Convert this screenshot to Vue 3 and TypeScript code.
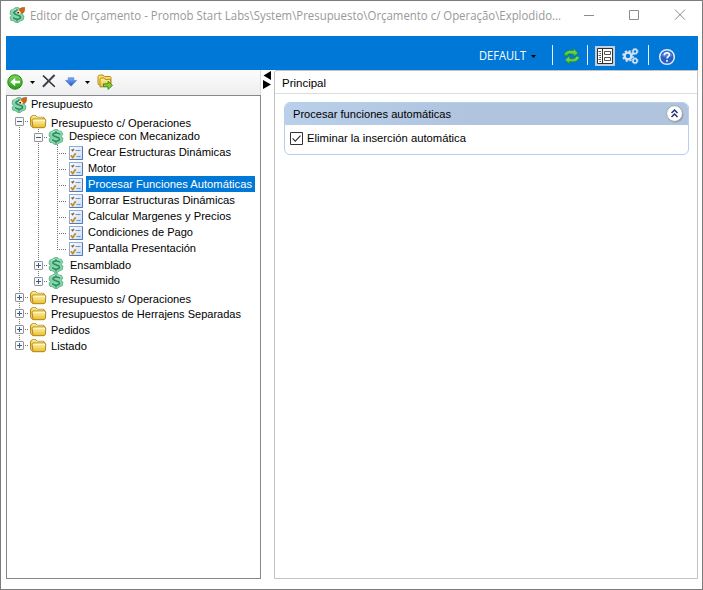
<script setup lang="ts">
type Guide = 'line' | 'tee' | 'end' | 'plus' | 'minus' | 'pluslast' | 'minusfirst'
interface Row {
  label: string
  icon: 'root' | 'folder' | 'money' | 'task'
  guides: Guide[]
  dy: number
  width: number
  selected?: boolean
}

const rows: Row[] = [
  { label: 'Presupuesto', icon: 'root', guides: [], dy: -1, width: 62 },
  { label: 'Presupuesto c/ Operaciones', icon: 'folder', guides: ['minusfirst'], dy: 2, width: 140 },
  { label: 'Despiece con Mecanizado', icon: 'money', guides: ['line', 'minus'], dy: -1, width: 131 },
  { label: 'Crear Estructuras Dinámicas', icon: 'task', guides: ['line', 'line', 'tee'], dy: -1, width: 143 },
  { label: 'Motor', icon: 'task', guides: ['line', 'line', 'tee'], dy: -1, width: 28 },
  { label: 'Procesar Funciones Automáticas', icon: 'task', guides: ['line', 'line', 'tee'], dy: -1, width: 164, selected: true },
  { label: 'Borrar Estructuras Dinámicas', icon: 'task', guides: ['line', 'line', 'tee'], dy: -1, width: 147 },
  { label: 'Calcular Margenes y Precios', icon: 'task', guides: ['line', 'line', 'tee'], dy: -1, width: 143 },
  { label: 'Condiciones de Pago', icon: 'task', guides: ['line', 'line', 'tee'], dy: -1, width: 105 },
  { label: 'Pantalla Presentación', icon: 'task', guides: ['line', 'line', 'end'], dy: -1, width: 108 },
  { label: 'Ensamblado', icon: 'money', guides: ['line', 'plus'], dy: 0, width: 61 },
  { label: 'Resumido', icon: 'money', guides: ['line', 'pluslast'], dy: -1, width: 50 },
  { label: 'Presupuesto s/ Operaciones', icon: 'folder', guides: ['plus'], dy: 2, width: 140 },
  { label: 'Presupuestos de Herrajens Separadas', icon: 'folder', guides: ['plus'], dy: 1, width: 190 },
  { label: 'Pedidos', icon: 'folder', guides: ['plus'], dy: 1, width: 39 },
  { label: 'Listado', icon: 'folder', guides: ['pluslast'], dy: 1, width: 36 },
]
</script>

<template>
  <div class="window">
    <svg class="defs" width="0" height="0">
      <defs>
        <linearGradient id="gFolder" x1="0" y1="0" x2="0" y2="1">
          <stop offset="0" stop-color="#fff6b0" /><stop offset="1" stop-color="#e9bd2c" />
        </linearGradient>
        <linearGradient id="gGreen" x1="0" y1="0" x2="0" y2="1">
          <stop offset="0" stop-color="#7ed75a" /><stop offset="1" stop-color="#1f9d12" />
        </linearGradient>
        <linearGradient id="gArrows" x1="0" y1="0" x2="0" y2="1">
          <stop offset="0" stop-color="#8fe35c" /><stop offset="1" stop-color="#3cb82c" />
        </linearGradient>
        <linearGradient id="gBlue" x1="0" y1="0" x2="0" y2="1">
          <stop offset="0" stop-color="#7fb2f6" /><stop offset="1" stop-color="#1c50c8" />
        </linearGradient>
        <linearGradient id="gTask" x1="0" y1="0" x2="1" y2="1">
          <stop offset="0" stop-color="#ffffff" /><stop offset="1" stop-color="#c9dcf5" />
        </linearGradient>
        <symbol id="money" viewBox="0 0 16 16">
          <path d="M6 .8 9.6.6 10.3 2 13.4 2.4 14.8 5.5 13 7.2 14.9 9 14.4 12.6 11 14 9.4 15.6 6.2 15.3 5.3 14 1.8 13.2 1 10.2 2.7 8.8 1.1 6.9 1.6 3.4 5 2Z" fill="#85d5aa" stroke="#58b085" stroke-width=".9" />
          <path d="M3 4.2c2-2.4 7.3-2.4 9.8-.2M3.2 10.6c.3 1.4 1.8 1.8 3 2" fill="none" stroke="#b9ebce" stroke-width="1" />
          <path d="M12 5.4C11 3.7 5.2 3.5 4.9 5.7c-.2 2.3 6.9 1.9 6.6 4.6-.3 2.4-6 2.4-7.4.2" fill="none" stroke="#2f8a60" stroke-width="1.5" />
          <path d="M8 2v2.2M8 12v2.4" stroke="#2f8a60" stroke-width="1.2" />
        </symbol>
        <symbol id="root" viewBox="0 0 16 16">
          <use href="#money" x="0" y="0" width="16" height="16" />
          <path d="m9.3 3.6 2.4-2.7 4-.6-.3 4-3.5 2.5z" fill="#d3631b" stroke="#9d420d" stroke-width=".5" />
          <path d="m7.6 4.2 2.2-1.2 2.5 2.9-2.4 1.6-2.3-.6z" fill="#fae6be" />
          <path d="M8.3 4.9h1.7v1.6H8.3z" fill="#20251f" />
        </symbol>
        <symbol id="folder" viewBox="0 0 17 16">
          <path d="M.6 11.5V3.3l1.4-1.5h4l1.3 1.5h6.3l1 1V12l-1.5 1.5H2.7z" fill="#f4d85d" stroke="#b08315" />
          <path d="M1.8 3.5 2.7 2.7h3.2l1 1.4h6" fill="none" stroke="#fff5b4" />
          <path d="m3 13.7-.9-7.2L3.2 5h11.6l1 1-.5 6.7-1.2 1z" fill="url(#gFolder)" stroke="#b58719" />
          <path d="M3.4 6.2H15" stroke="#fffcd8" />
        </symbol>
        <symbol id="task" viewBox="0 0 14 14">
          <rect x=".5" y=".5" width="13" height="13" fill="url(#gTask)" stroke="#8baddb" />
          <path d="M.5 13.5h13V.5" fill="none" stroke="#5579b7" />
          <path d="M6.5 4.5h5M7.5 10.5h4" stroke="#7794c8" />
          <path d="m2.5 3.5 1.2 1.2 1.2-1.8" fill="none" stroke="#7c6349" stroke-width="1.3" />
          <path d="m1.9 9.3 1.8 2.2 3-4.2" fill="none" stroke="#d18618" stroke-width="1.7" />
        </symbol>
      </defs>
    </svg>

    <header class="titlebar">
      <svg class="app-icon" width="16" height="16"><use href="#root" /></svg>
      <svg class="title" width="534" height="20"><text x="0" y="14" textLength="531" lengthAdjust="spacingAndGlyphs">Editor de Orçamento - Promob Start Labs\System\Presupuesto\Orçamento c/ Operação\Explodido...</text></svg>
      <svg class="caption" width="100" height="12" viewBox="0 0 100 12">
        <path d="M0 6.5h10M45.5 1.5h9v9h-9zM91 .7l10 10M101 .7l-10 10" fill="none" stroke="#8c8c8c" />
      </svg>
    </header>

    <nav class="ribbon">
      <svg class="profile" width="48" height="18"><text x="0" y="12" textLength="47" lengthAdjust="spacingAndGlyphs">DEFAULT</text></svg>
      <i class="caret"></i>
      <i class="sep s1"></i>
      <svg class="refresh" width="17" height="17" viewBox="0 0 17 17">
        <g fill="url(#gArrows)" stroke="#1f8a1c" stroke-width=".6">
          <path d="M.9 7.2C1.8 3 6 1.8 10.4 2.9V.5l4.6 4.7-4.4 3.6V6.4C7.2 5.4 4.8 5.5 3.9 8z" />
          <path d="M16.2 9c-.8 4.4-5.3 5.6-9.5 4.6v2.7L2 11.9l4.5-3.8v2.5c3.4.9 6 .1 6.9-2.3z" />
        </g>
      </svg>
      <i class="sep s2"></i>
      <span class="pressed">
        <svg width="16" height="16" viewBox="0 0 16 16">
          <path d="M.5.5h15v15H.5z" fill="#fff" stroke="#303030" />
          <path d="M5.5.5v15" stroke="#303030" />
          <path d="M1.5 3.5H4M2.5 5.5H4M1.5 7.5H4M2.5 9.5H4M1.5 11.5H4M2.5 13.5H4M7.5 3.5h6v3h-6zM7.5 9.5h6v3h-6z" fill="none" stroke="#555" />
        </svg>
      </span>
      <svg class="gears" width="17" height="17" viewBox="0 0 17 17">
        <g fill="none" stroke="#d5e4f3">
          <circle cx="6" cy="8" r="3.4" stroke-width="2.4" />
          <circle cx="6" cy="8" r="5.1" stroke-width="1.5" stroke-dasharray="2.3 1.7" />
          <circle cx="13" cy="3.4" r="2" stroke-width="1.5" />
          <circle cx="13" cy="3.4" r="3" stroke-width=".9" stroke-dasharray="1.5 .85" />
          <circle cx="13" cy="12.8" r="2" stroke-width="1.5" />
          <circle cx="13" cy="12.8" r="3" stroke-width=".9" stroke-dasharray="1.5 .85" />
        </g>
      </svg>
      <i class="sep s3"></i>
      <svg class="help" width="18" height="18" viewBox="0 0 18 18">
        <circle cx="9" cy="9" r="7.3" fill="#2c5fc4" stroke="#e2ebf8" stroke-width="1.5" />
        <path d="M3.5 8a5.6 5.6 0 0 1 11 0q-5.5 2-11 0" fill="#5585da" />
        <path d="M6.4 7.3C6.3 3.8 11.7 4.2 11.4 7c-.1 1.6-2.4 1.7-2.4 3.5M9 12v1.7" fill="none" stroke="#fff" stroke-width="1.6" />
      </svg>
    </nav>

    <main class="content">
      <aside class="left">
        <div class="toolbar">
          <svg width="16" height="16" viewBox="0 0 16 16">
            <circle cx="8" cy="8" r="7.2" fill="url(#gGreen)" stroke="#27831b" />
            <path d="M13 6.8v2.4H8.2v3L3.4 8l4.8-4.2v3z" fill="#fff" />
          </svg>
          <i class="caret c1"></i>
          <svg class="delete" width="14" height="14" viewBox="0 0 14 14">
            <path d="m1 1.5 11.8 11.2" stroke="#25292f" stroke-width="1.5" />
            <path d="M12.6 1 .9 12.8" stroke="#3b4351" stroke-width="2" />
          </svg>
          <svg class="down" width="12" height="10" viewBox="0 0 12 10">
            <path d="M3.2.8h5.6v2.8h2.7L6 9.2.5 3.6h2.7z" fill="url(#gBlue)" stroke="#4e7fd5" stroke-width=".7" />
          </svg>
          <i class="caret c2"></i>
          <svg class="export" width="16" height="16" viewBox="0 0 16 16">
            <path d="M1 10V2.5L2.3 1H6l1.2 1.5h6l.8 1V11H2z" fill="#f5dd68" stroke="#b78e1e" />
            <path d="M3 13V5.4L4 4h3l1 1.4h5.5v6.7z" fill="url(#gFolder)" stroke="#b78e1e" />
            <path d="M6.5 9.8H11V7.2l4.5 4.2-4.5 4v-2.6H6.5z" fill="#83cc35" stroke="#3d8420" stroke-width=".9" />
          </svg>
        </div>
        <div class="tree">
          <div v-for="row in rows" :key="row.label" class="row" :class="row.icon">
            <span v-for="(guide, i) in row.guides" :key="i" class="cell">
              <svg width="19" height="16" viewBox="0 0 19 16">
                <path v-if="guide === 'end' || guide === 'pluslast'" d="M9.5 0v9" class="dots" />
                <path v-else-if="guide === 'minusfirst'" d="M9.5 8v8" class="dots" />
                <path v-else d="M9.5 0v16" class="dots" />
                <path v-if="guide !== 'line'" d="M9 8.5h10" class="dots" />
                <template v-if="guide.startsWith('plus') || guide.startsWith('minus')">
                  <rect x="5.5" y="4.5" width="8" height="8" rx=".6" fill="#f8f8f8" stroke="#919191" />
                  <path d="M7 8.5h5" stroke="#3d569c" />
                  <path v-if="guide.startsWith('plus')" d="M9.5 6v5" stroke="#3d569c" />
                </template>
              </svg>
            </span>
            <svg v-if="row.icon === 'folder'" class="node" width="17" height="16"><use href="#folder" y="1" /></svg>
            <svg v-else-if="row.icon === 'task'" class="node" width="14" height="14"><use href="#task" /></svg>
            <svg v-else class="node" width="16" height="16"><use :href="'#' + row.icon" /></svg>
            <span class="label" :class="{ selected: row.selected, collapsed: row.icon === 'money' && !row.guides.includes('minus') }" :style="{ marginTop: row.dy * 2 + 'px' }">
              <svg :width="row.width + 1" height="16"><text x="0" y="12" :textLength="row.width" lengthAdjust="spacingAndGlyphs">{{ row.label }}</text></svg>
            </span>
          </div>
        </div>
      </aside>
      <div class="splitter">
        <svg width="9" height="18" viewBox="0 0 9 18"><path d="M8 0v9L.5 4.5zM0 9v9l8-4.5z" fill="#000" /></svg>
      </div>
      <section class="right">
        <div class="tab"><svg width="45" height="16"><text x="0" y="12" textLength="44" lengthAdjust="spacingAndGlyphs">Principal</text></svg></div>
        <div class="group">
          <div class="group-head">
            <svg width="160" height="16"><text x="0" y="12" textLength="158" lengthAdjust="spacingAndGlyphs">Procesar funciones automáticas</text></svg>
            <svg class="collapse" width="20" height="20" viewBox="0 0 20 20">
              <circle cx="10.3" cy="10.5" r="8.2" fill="#8a92a3" opacity=".75" />
              <circle cx="9.5" cy="9.5" r="7.9" fill="#fff" stroke="#a0a4ae" />
              <path d="m6.5 9 3-3 3 3M6.5 13l3-3 3 3" fill="none" stroke="#23316f" stroke-width="1.5" />
            </svg>
          </div>
          <div class="group-body">
            <svg width="13" height="13" viewBox="0 0 13 13"><path d="M.5.5h12v12H.5z" fill="#fff" stroke="#333" /><path d="m2.6 6.3 2.7 2.8 5.2-5.4" fill="none" stroke="#333" stroke-width="1.2" /></svg>
            <svg class="check-label" width="161" height="16"><text x="0" y="12" textLength="159" lengthAdjust="spacingAndGlyphs">Eliminar la inserción automática</text></svg>
          </div>
        </div>
      </section>
    </main>
  </div>
</template>

<style>
body { margin: 0; background: #fff; }
</style>

<style scoped>
* { box-sizing: border-box; }
svg { display: block; flex: none; overflow: visible; }
.defs { position: absolute; }
.window {
  width: 703px; height: 590px; border: 1px solid #7c7c7c; background: #fff;
  display: flex; flex-direction: column;
  font-family: "Liberation Sans", Arial, sans-serif; font-size: 11px; overflow: hidden;
}
.titlebar { height: 35px; flex: none; display: flex; align-items: flex-start; padding: 6px 0 0 8px; }
.title { margin: -1px 0 0 5px; font-family: "Open Sans", "Noto Sans", sans-serif; font-size: 12px; fill: #999; }
.caption { margin: 2px 0 0 20px; }
.ribbon { height: 34px; flex: none; margin: 0 4px 0 5px; background: #0078d7; display: flex; padding-left: 473px; }
.profile { margin-top: 12px; font-family: "Open Sans", "Noto Sans", sans-serif; font-size: 12px; fill: #fff; }
.caret { display: block; flex: none; width: 5px; height: 3px; background: #000; clip-path: polygon(0 0, 100% 0, 50% 100%); }
.ribbon .caret { margin: 19px 0 0 4px; }
.sep { width: 1px; height: 20px; background: #e6f2fb; margin-top: 9px; flex: none; }
.s1 { margin-left: 16px; }
.refresh { margin: 12px 0 0 10px; }
.s2 { margin-left: 7px; }
.pressed { flex: none; width: 20px; height: 20px; background: #c1cfe0; display: flex; align-items: center; justify-content: center; margin: 10px 0 0 7px; }
.gears { margin: 12px 0 0 7px; }
.s3 { margin-left: 9px; }
.help { margin: 12px 0 0 9px; }
.content { flex: 1; display: flex; padding: 0 4px 10px 5px; min-height: 0; }
.left { width: 255px; flex: none; display: flex; flex-direction: column; }
.toolbar { height: 25px; flex: none; background: linear-gradient(#fcfcfc, #eee); border-right: 1px solid #ddd; display: flex; align-items: flex-start; padding: 4px 0 0 1px; }
.c1 { margin: 7px 0 0 7px; }
.delete { margin: 0 0 0 7px; }
.down { margin: 3px 0 0 9px; }
.c2 { margin: 7px 0 0 8px; }
.export { margin-left: 7px; }
.tree { flex: 1; border: 1px solid #828790; background: #fff; padding: 1px 0 0 3px; }
.row { height: 16px; display: flex; align-items: center; }
.cell { flex: none; width: 19px; height: 16px; }
.dots { fill: none; stroke: #777; stroke-dasharray: 1 1; }
.row .node { margin-left: 1px; }
.row.money .node { margin-left: 0; }
.row.task .node { margin-left: 2px; }
.label { flex: none; height: 16px; margin-left: 4px; }
.money .label { margin-left: 5px; }
.money .label.collapsed { margin-left: 6px; }
.task .label { margin-left: 3px; padding: 0 2px 0 2px; }
.selected { background: #0078d7; fill: #fff; }
.splitter { width: 13px; flex: none; padding: 1px 0 0 2px; }
.right { flex: 1; min-width: 0; border: 1px solid #c3c3c3; border-radius: 3px 0 0 0; }
.tab { height: 23px; border-bottom: 1px solid #ddd; padding: 4px 0 0 7px; }
.group { width: 405px; height: 53px; margin: 8px 0 0 9px; border: 1px solid #b5cfee; border-radius: 6px; overflow: hidden; }
.group-head { height: 22px; background: linear-gradient(90deg, #b9cfea, #b0c4de 45%, #b0c4de); display: flex; justify-content: space-between; padding: 3px 3px 0 8px; }
.collapse { margin-top: -2px; }
.group-body { display: flex; padding: 7px 0 0 5px; }
.check-label { margin: -2px 0 0 4px; }
</style>
